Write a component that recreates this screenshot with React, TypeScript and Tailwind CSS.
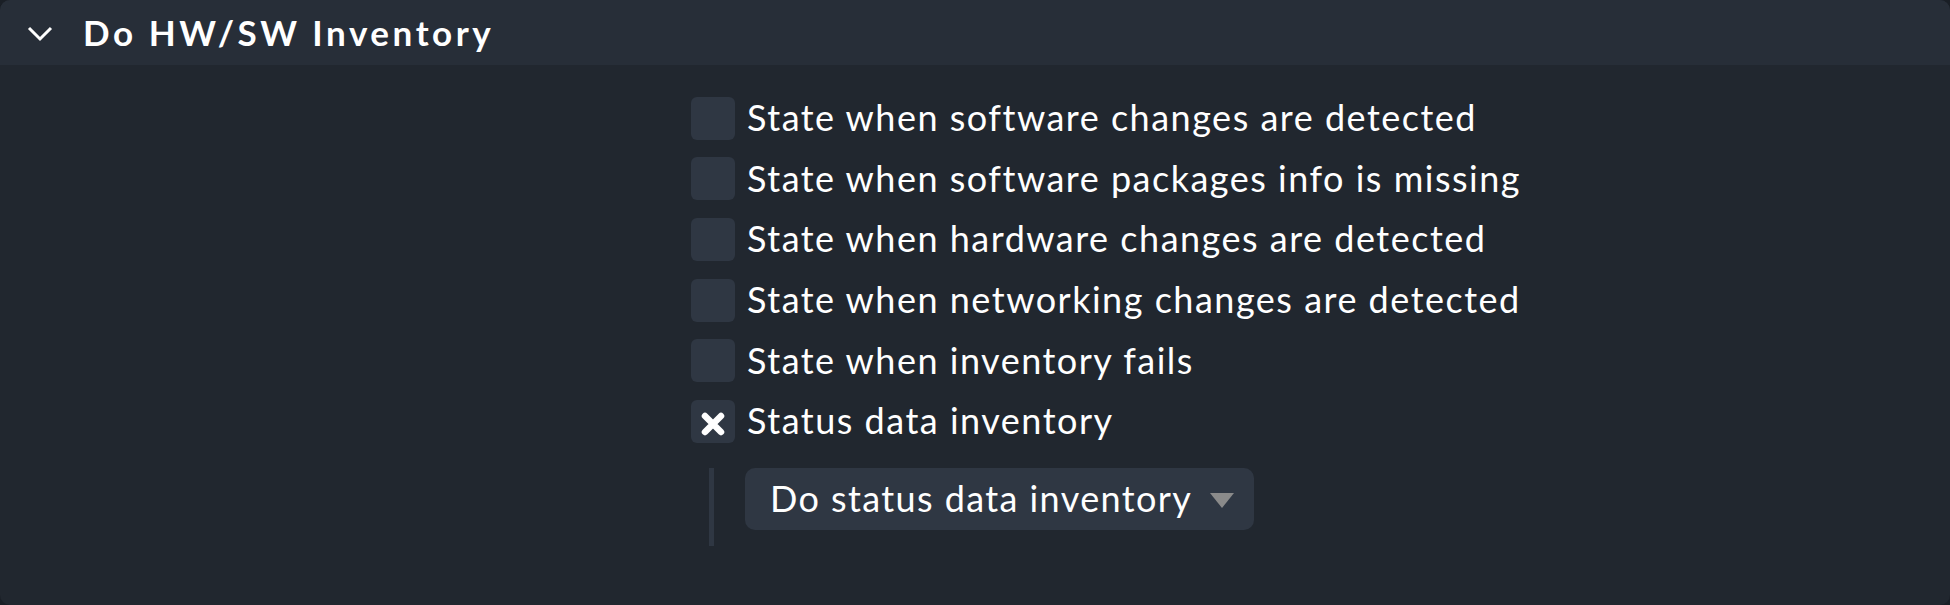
import React from "react";

const rows = [
  { label: "State when software changes are detected", checked: false },
  { label: "State when software packages info is missing", checked: false },
  { label: "State when hardware changes are detected", checked: false },
  { label: "State when networking changes are detected", checked: false },
  { label: "State when inventory fails", checked: false },
  { label: "Status data inventory", checked: true },
];

function Checkbox({ checked }: { checked: boolean }) {
  return (
    <span className="flex h-[43px] w-[44px] shrink-0 items-center justify-center rounded-[6px] bg-[#2f3743]">
      {checked && (
        <svg width="26" height="26" viewBox="0 0 26 26" className="mt-[6px]">
          <path d="M5 5 L21 21 M21 5 L5 21" stroke="#ffffff" strokeWidth="6.5" strokeLinecap="round" />
        </svg>
      )}
    </span>
  );
}

export default function App() {
  return (
    <div className="h-[605px] w-[1950px] bg-[#1a1f26] font-['Lato','Noto_Sans',sans-serif] text-white">
      <div className="flex h-full flex-col overflow-hidden rounded-[10px] bg-[#21272f]">
        <header className="flex h-[65px] shrink-0 items-center bg-[#272e38]">
          <svg width="26" height="16" viewBox="0 0 26 16" className="ml-[27px] mt-[3px]">
            <path d="M2 2 L13 13 L24 2" fill="none" stroke="#ffffff" strokeWidth="3" />
          </svg>
          <h2 className="ml-[30px] text-[35px] font-bold tracking-[3.55px]">Do HW/SW Inventory</h2>
        </header>

        <div className="grid grid-cols-[691px_1fr] pt-[23px]">
          <div />
          <div className="flex flex-col">
            {rows.map((r) => (
              <label key={r.label} className="flex h-[60.6px] items-center gap-[12px]">
                <Checkbox checked={r.checked} />
                <span className="-mt-[2px] text-[36px] leading-none tracking-[1.5px]">{r.label}</span>
              </label>
            ))}

            <div className="mt-[16px] flex">
              <div className="ml-[18px] h-[78px] w-[5px] bg-[#2f3743]" />
              <div className="ml-[31px] flex h-[62px] items-center rounded-[10px] bg-[#2f3743] pl-[25px] pr-[20px]">
                <span className="-mt-[2px] text-[36px] leading-none tracking-[1.4px]">Do status data inventory</span>
                <svg width="24" height="15" viewBox="0 0 24 15" className="ml-[18px] mt-[4px]">
                  <path d="M0 0 L24 0 L12 15 Z" fill="#8a8a8a" />
                </svg>
              </div>
            </div>
          </div>
        </div>
      </div>
    </div>
  );
}
